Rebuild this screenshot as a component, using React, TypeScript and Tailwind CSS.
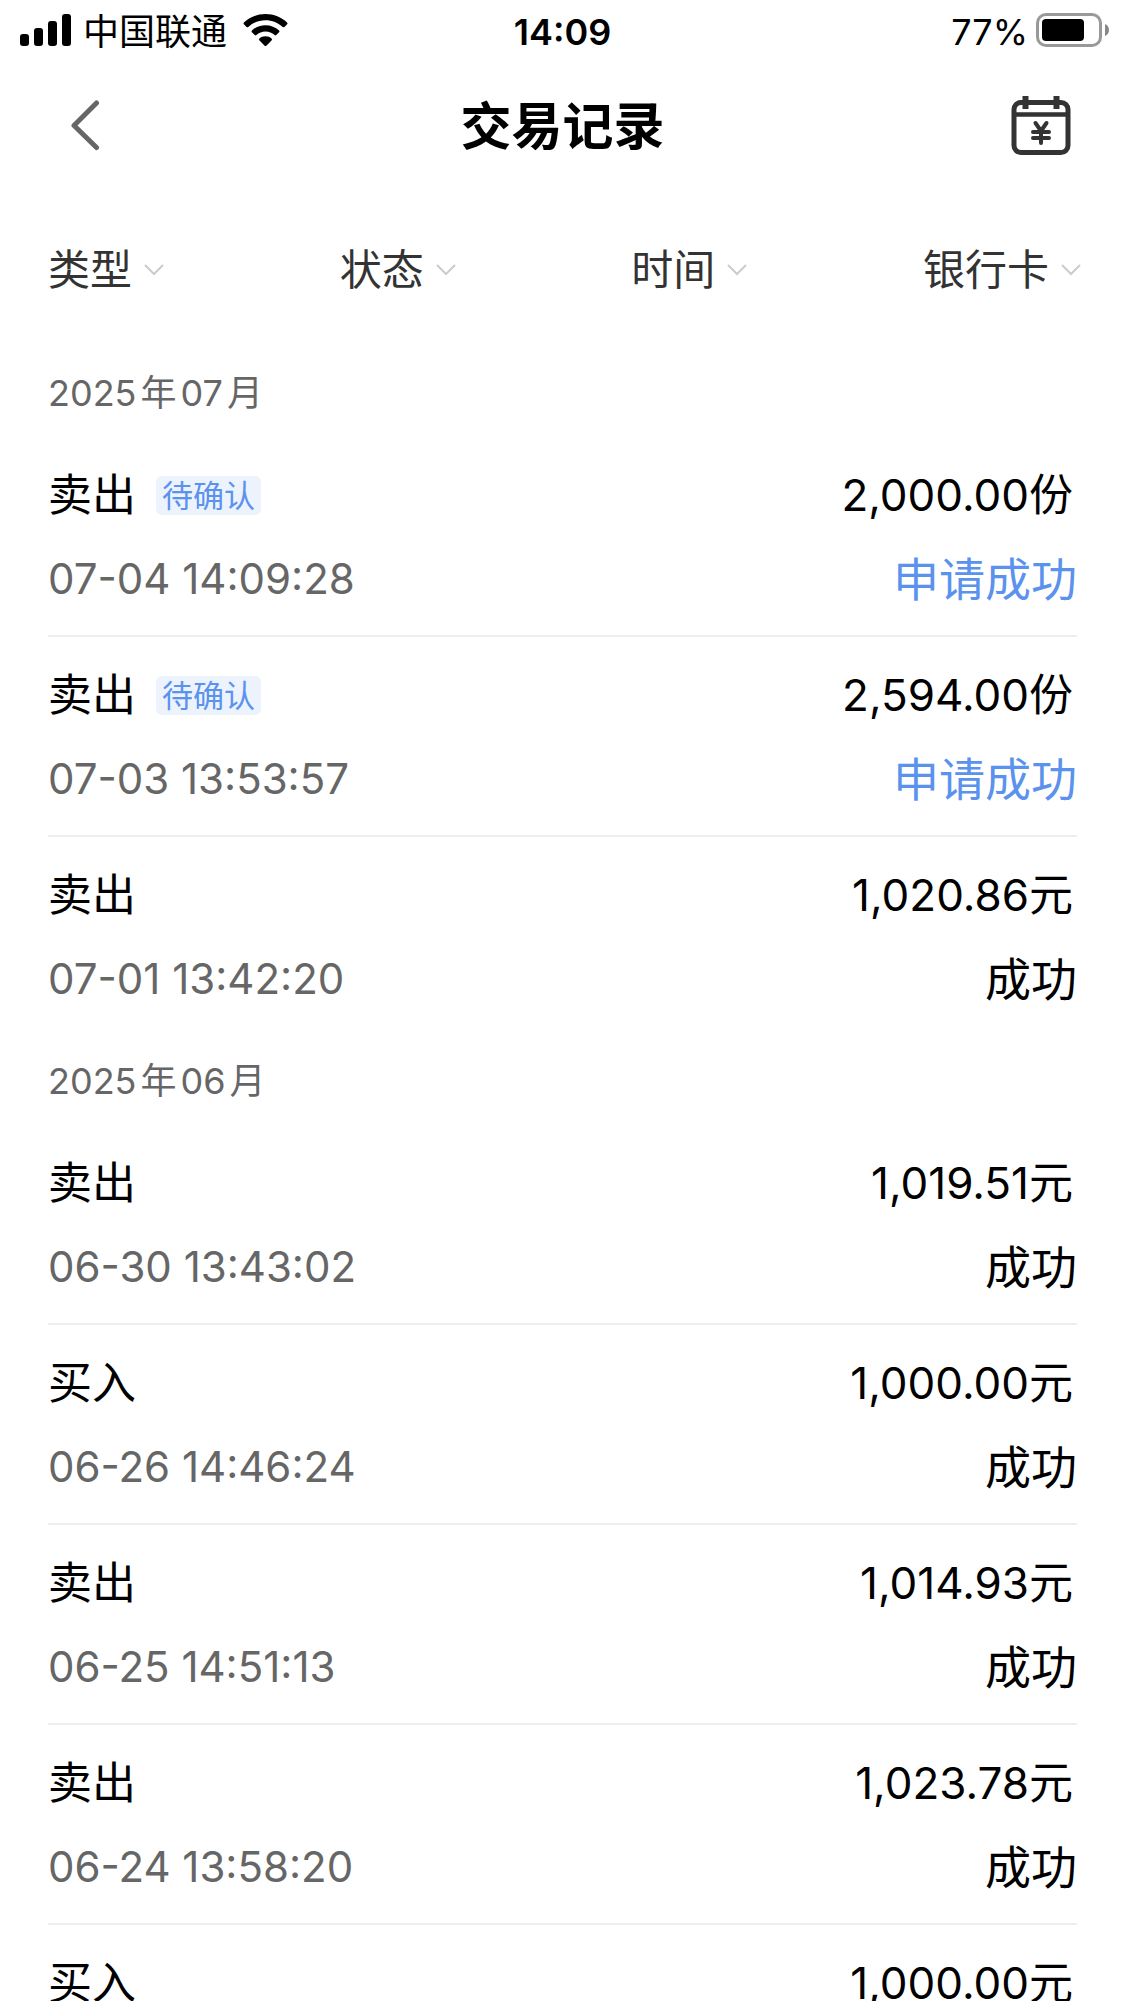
interface TradeRecord {
  type: string;
  amount: string;
  time?: string;
  status?: string;
  pending?: boolean;
}

interface MonthGroup {
  year: string;
  month: string;
  records: TradeRecord[];
}

const FILTERS = ["类型", "状态", "时间", "银行卡"];

const GROUPS: MonthGroup[] = [
  {
    year: "2025",
    month: "07",
    records: [
      { type: "卖出", time: "07-04 14:09:28", amount: "2,000.00份", status: "申请成功", pending: true },
      { type: "卖出", time: "07-03 13:53:57", amount: "2,594.00份", status: "申请成功", pending: true },
      { type: "卖出", time: "07-01 13:42:20", amount: "1,020.86元", status: "成功" },
    ],
  },
  {
    year: "2025",
    month: "06",
    records: [
      { type: "卖出", time: "06-30 13:43:02", amount: "1,019.51元", status: "成功" },
      { type: "买入", time: "06-26 14:46:24", amount: "1,000.00元", status: "成功" },
      { type: "卖出", time: "06-25 14:51:13", amount: "1,014.93元", status: "成功" },
      { type: "卖出", time: "06-24 13:58:20", amount: "1,023.78元", status: "成功" },
      { type: "买入", amount: "1,000.00元" },
    ],
  },
];

function StatusBar() {
  return (
    <div className="grid h-[60px] shrink-0 grid-cols-3 items-center px-4 text-4xl">
      <div className="flex items-center pl-1">
        <svg width="51" height="32" viewBox="0 0 51 32" aria-hidden="true">
          <rect x="0" y="20" width="9" height="12" rx="3" />
          <rect x="14" y="14" width="9" height="18" rx="3" />
          <rect x="28" y="7" width="9" height="25" rx="3" />
          <rect x="42" y="0" width="9" height="32" rx="3" />
        </svg>
        <span className="ml-3 pt-1">中国联通</span>
        <svg className="ml-4" width="45" height="33" viewBox="0 0 46 34" aria-hidden="true">
          <path d="M23 0C14.500 0 6.500 3.400.8 8.700c-.6.500-.6 1.300-.1 1.800l2.800 2.900c.5.500 1.300.5 1.800 0C10 9.100 16.200 6.400 23 6.400s13 2.700 17.700 7c.5.500 1.300.5 1.800 0l2.800-2.900c.5-.5.500-1.300-.1-1.800C39.500 3.400 31.500 0 23 0Z" />
          <path d="M23 11.500c-5.400 0-10.300 2.100-14 5.500-.5.500-.5 1.300 0 1.800l2.900 2.900c.5.500 1.200.5 1.700 0 2.500-2.300 5.800-3.700 9.400-3.700s6.900 1.400 9.400 3.700c.5.500 1.200.5 1.700 0l2.900-2.900c.5-.5.500-1.300 0-1.800-3.700-3.400-8.600-5.500-14-5.500Z" />
          <path d="M23 23c-2.500 0-4.700.9-6.400 2.400-.5.500-.5 1.200 0 1.700l5.500 5.600c.5.500 1.300.5 1.800 0l5.500-5.600c.5-.5.500-1.200 0-1.700C27.700 23.900 25.500 23 23 23Z" />
        </svg>
      </div>
      <div className="pt-1 text-center font-semibold">14:09</div>
      <div className="flex items-center justify-end gap-2">
        <span className="pt-1">77%</span>
        <svg width="73" height="34" viewBox="0 0 73 34" aria-hidden="true">
          <rect x="1.500" y="1.500" width="63" height="31" rx="8.500" fill="none" stroke="#999" strokeWidth="3" />
          <rect x="6" y="6" width="42" height="22" rx="4" />
          <path d="M69 11c2.500 1 4 3.300 4 6s-1.500 5-4 6Z" fill="#888" />
        </svg>
      </div>
    </div>
  );
}

function Header() {
  return (
    <header className="grid h-[130px] shrink-0 grid-cols-3 items-center px-[54px]">
      <button type="button" aria-label="返回" className="justify-self-start pl-4">
        <svg width="30" height="52" viewBox="0 0 30 52" fill="none" stroke="#666" strokeWidth="5" strokeLinecap="round" strokeLinejoin="round">
          <path d="M26.500 4 4 26.500 26.500 48.500" />
        </svg>
      </button>
      <h1 className="pt-1 text-center text-[51px] leading-[60px] font-bold">交易记录</h1>
      <button type="button" aria-label="交易日历" className="justify-self-end">
        <svg width="60" height="62" viewBox="0 0 60 62" fill="none" stroke="#333" strokeWidth="5" strokeLinecap="round" strokeLinejoin="round">
          <rect x="3" y="8.500" width="54" height="50" rx="7" />
          <path d="M4 20.500h52" strokeWidth="4.500" />
          <path d="M14.500 2v13M45.500 2v13" strokeLinecap="butt" strokeWidth="6" />
          <path d="M24.500 29l5.500 8 5.500-8M30 37v12M22 38h16M22 44h16" strokeWidth="4" />
        </svg>
      </button>
    </header>
  );
}

function FilterBar() {
  return (
    <nav className="flex h-[159px] shrink-0 items-center justify-between pl-12 pr-11 text-[#333]">
      {FILTERS.map((label) => (
        <button key={label} type="button" className="flex items-center gap-3 pt-px text-[42px] leading-[60px]">
          {label}
          <svg width="20" height="12" viewBox="0 0 20 12" fill="none" stroke="#ccc" strokeWidth="2">
            <path d="M1 1l9 9 9-9" />
          </svg>
        </button>
      ))}
    </nav>
  );
}

function RecordRow({ record }: { record: TradeRecord }) {
  return (
    <li className="flex h-[200px] flex-col justify-center gap-6 border-b-2 border-[#eee] pt-0.5 leading-[60px] last:border-transparent">
      <div className="flex h-[60px] items-center justify-between text-[44px]">
        <div className="flex items-center gap-5">
          <span>{record.type}</span>
          {record.pending && (
            <span className="rounded-md bg-[#edf3fd] px-1.5 text-[31px] leading-[39px] text-[#5a92ee]">待确认</span>
          )}
        </div>
        <span className="pr-1">{record.amount}</span>
      </div>
      <div className="flex h-[60px] items-center justify-between">
        <time className="text-[42px] text-[#666]">{record.time}</time>
        <span className={record.pending ? "text-[46px] text-[#5a92ee]" : "text-[46px]"}>{record.status}</span>
      </div>
    </li>
  );
}

export default function App() {
  return (
    <div className="flex h-screen flex-col overflow-hidden bg-white font-['Inter','Noto_Sans_CJK_SC',sans-serif] text-black">
      <StatusBar />
      <Header />
      <FilterBar />
      <main className="min-h-0 flex-1 overflow-hidden px-12">
        {GROUPS.map((group) => (
          <section key={group.month}>
            <h2 className="flex h-[88px] items-center gap-1 text-4xl text-[#666]">
              <span>{group.year}</span>
              <span>年</span>
              <span>{group.month}</span>
              <span>月</span>
            </h2>
            <ul>
              {group.records.map((record, i) => (
                <RecordRow key={i} record={record} />
              ))}
            </ul>
          </section>
        ))}
      </main>
    </div>
  );
}
